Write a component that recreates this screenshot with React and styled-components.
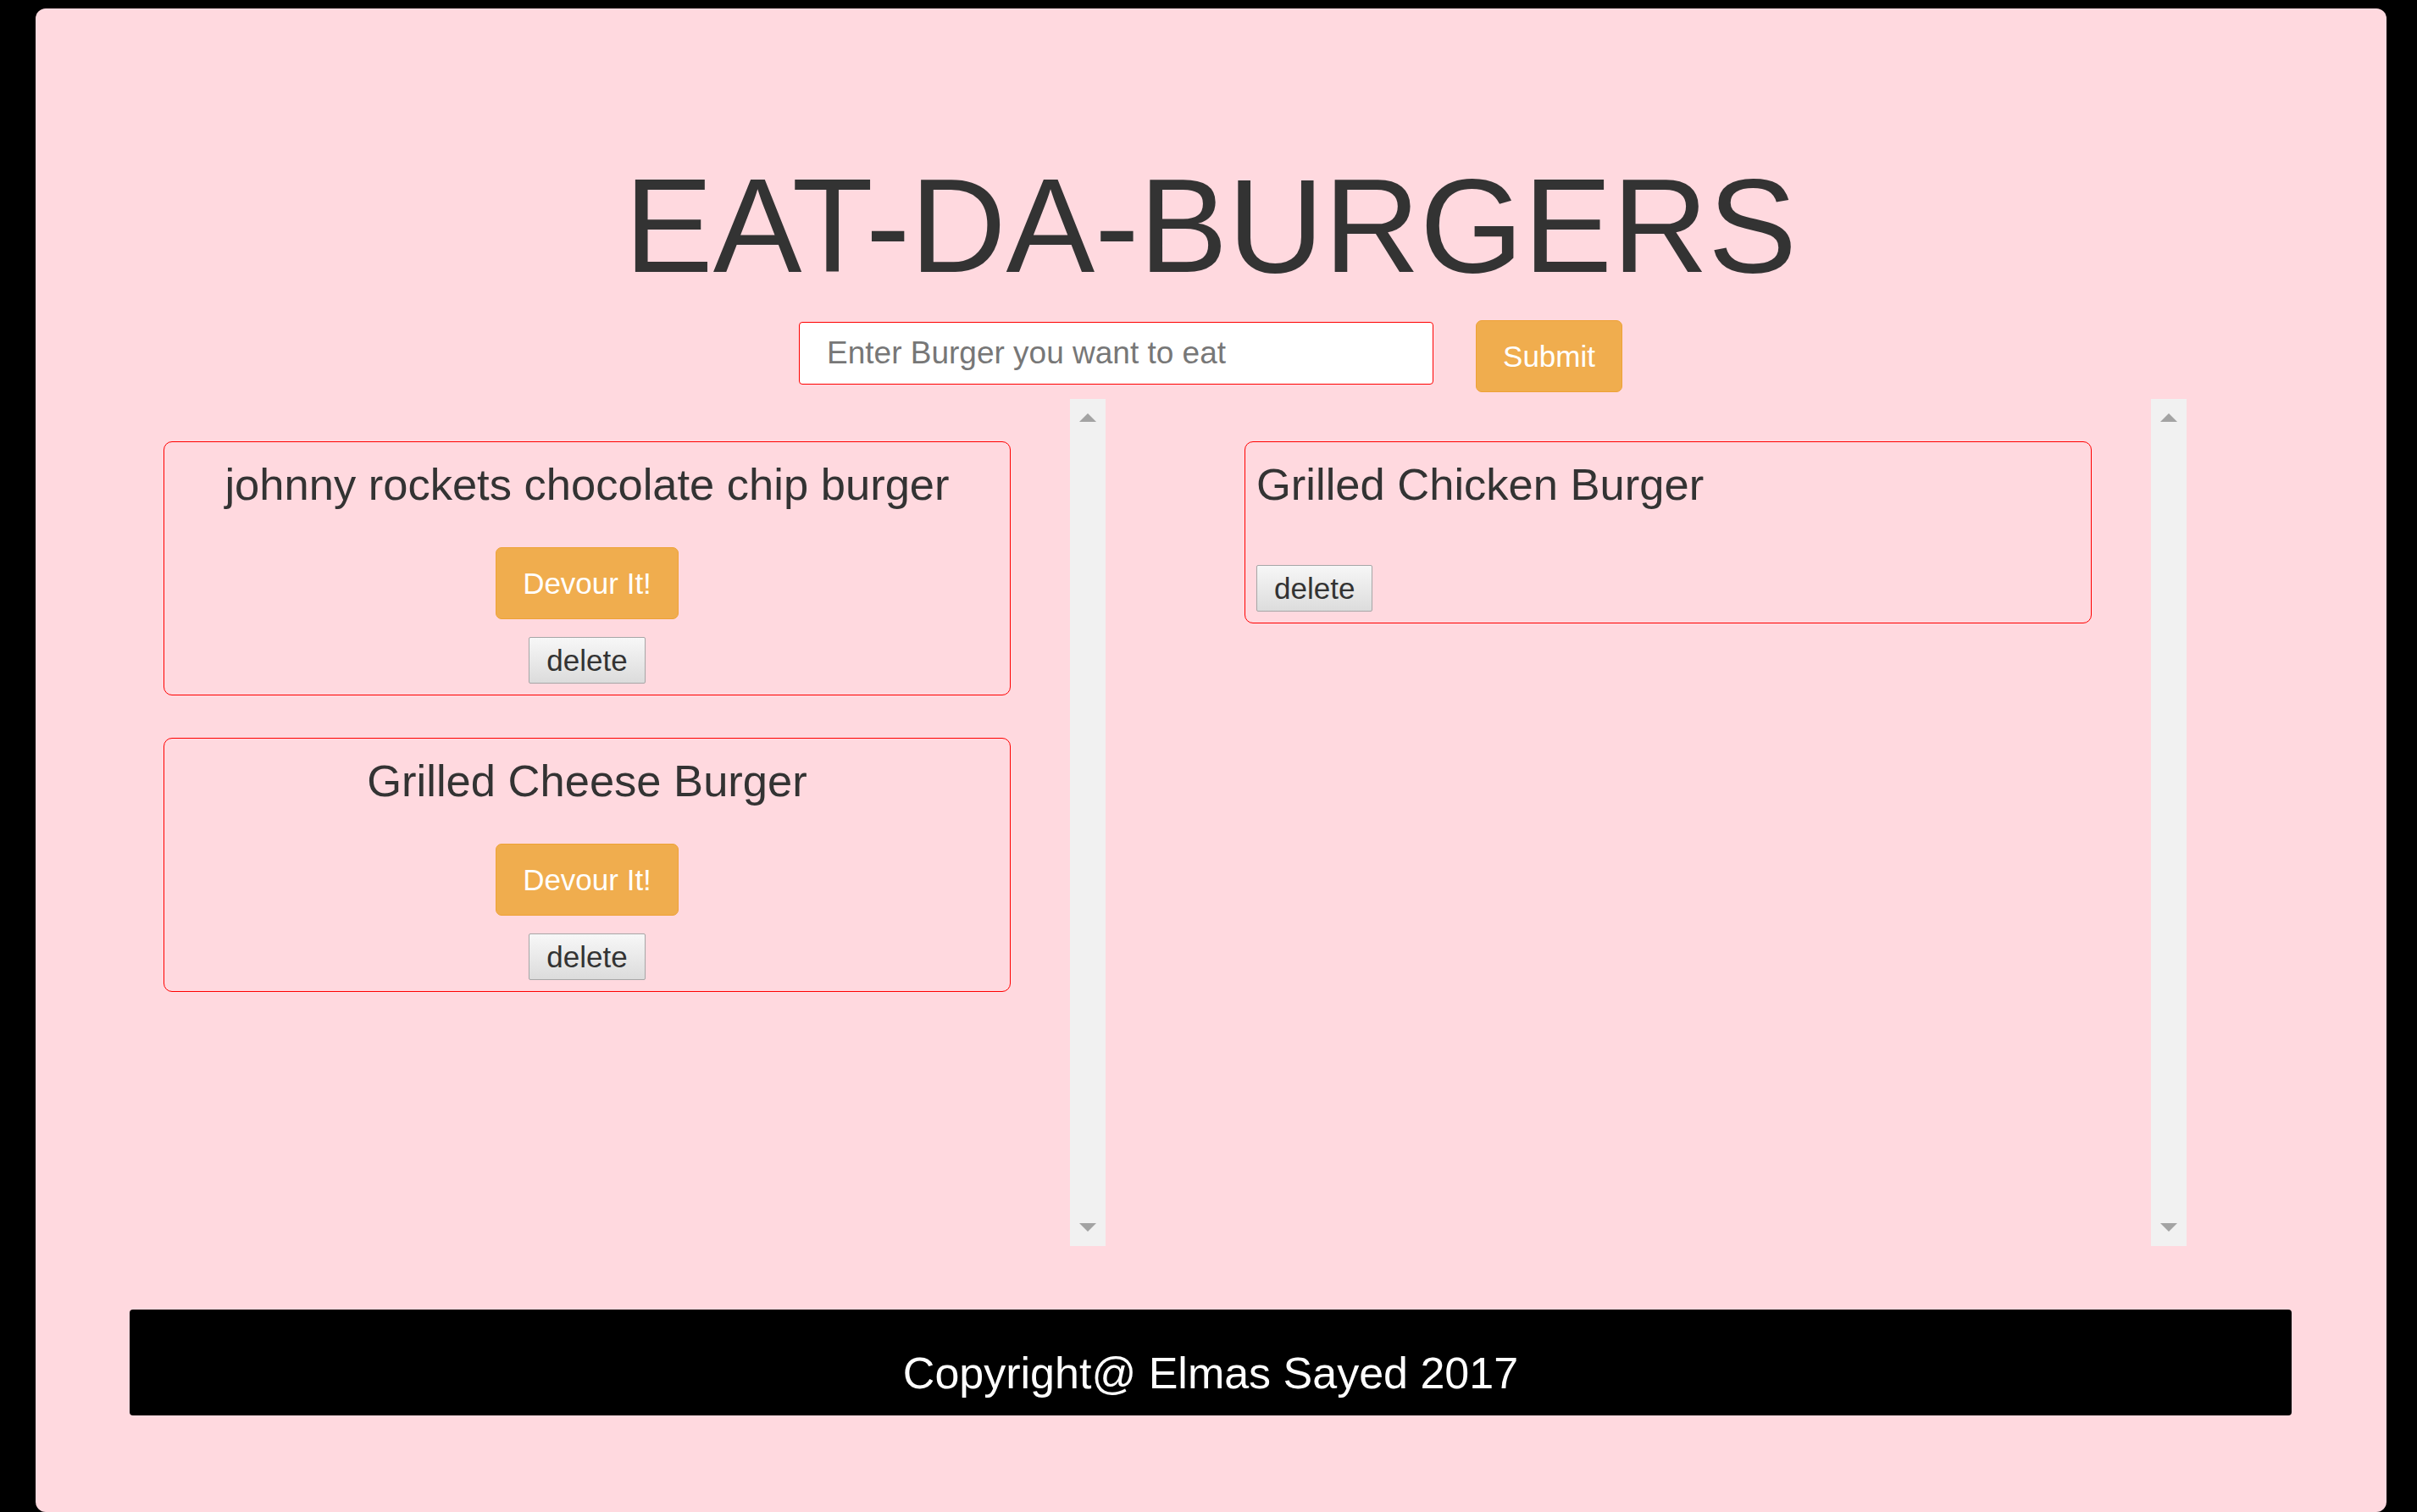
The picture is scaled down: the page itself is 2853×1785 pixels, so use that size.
import React from 'react'
import styled, { createGlobalStyle } from 'styled-components'

const GlobalStyle = createGlobalStyle`
  html, body {
    margin: 0;
    padding: 0;
    background: #000;
  }
  body {
    font-family: "Liberation Sans", Arial, sans-serif;
    color: #333;
  }
  * {
    box-sizing: border-box;
  }
`

const burgers = [
  { id: 1, name: 'johnny rockets chocolate chip burger', devoured: false },
  { id: 2, name: 'Grilled Cheese Burger', devoured: false },
  { id: 3, name: 'Grilled Chicken Burger', devoured: true },
]

export default function App () {
  const waiting = burgers.filter(b => !b.devoured)
  const eaten = burgers.filter(b => b.devoured)

  return (
    <>
      <GlobalStyle />
      <StyledPanel>
        <StyledContainer>
          <StyledTitle>EAT-DA-BURGERS</StyledTitle>
          <StyledForm onSubmit={e => e.preventDefault()}>
            <StyledInput type="text" placeholder="Enter Burger you want to eat" />
            <StyledOrangeButton type="submit">Submit</StyledOrangeButton>
          </StyledForm>
          <StyledColumns>
            <BurgerColumn burgers={waiting} centered />
            <BurgerColumn burgers={eaten} />
          </StyledColumns>
          <StyledFooter>
            <h3>Copyright@ Elmas Sayed 2017</h3>
          </StyledFooter>
        </StyledContainer>
      </StyledPanel>
    </>
  )
}

function BurgerColumn ({ burgers, centered }) {
  return (
    <StyledScrollBox>
      <StyledList>
        {burgers.map(burger => (
          <StyledCard key={burger.id} $centered={centered}>
            <StyledCardTitle>{burger.name}</StyledCardTitle>
            <StyledActions $centered={centered}>
              {!burger.devoured && (
                <StyledOrangeButton type="button">Devour It!</StyledOrangeButton>
              )}
              <StyledDeleteButton type="button">delete</StyledDeleteButton>
            </StyledActions>
          </StyledCard>
        ))}
      </StyledList>
      <StyledRail>
        <StyledArrow $dir="up" />
        <StyledArrow $dir="down" />
      </StyledRail>
    </StyledScrollBox>
  )
}

const StyledPanel = styled.div`
  margin: 10px 36px 0 42px;
  min-height: 1775px;
  background: #ffd9df;
  border-radius: 12px;
  padding: 171px 0 114px;
`

const StyledContainer = styled.div`
  width: 2552px;
  margin-left: 111px;
`

const StyledTitle = styled.h1`
  margin: 0;
  text-align: center;
  font-size: 157px;
  font-weight: 400;
  line-height: 172px;
  color: #333;
`

const StyledForm = styled.form`
  display: flex;
  justify-content: center;
  align-items: flex-start;
  gap: 50px;
  margin-top: 25px;
`

const StyledInput = styled.input`
  width: 749px;
  height: 74px;
  margin-top: 2px;
  padding: 0 32px;
  border: 1px solid #ff0000;
  border-radius: 4px;
  background: #fff;
  font-family: inherit;
  font-size: 37px;
  color: #555;
  outline: none;
  &::placeholder {
    color: #777;
  }
`

const StyledOrangeButton = styled.button`
  height: 85px;
  padding: 0 31px;
  background: #f0ad4e;
  border: 1px solid #eea236;
  border-radius: 7px;
  color: #fff;
  font-family: inherit;
  font-size: 35px;
  cursor: pointer;
`

const StyledDeleteButton = styled.button`
  height: 55px;
  padding: 0 20px;
  background: linear-gradient(#f7f7f7, #dcdcdc);
  border: 1px solid #a6a6a6;
  border-radius: 2px;
  color: #333;
  font-family: inherit;
  font-size: 35px;
  cursor: pointer;
`

const StyledColumns = styled.div`
  display: grid;
  grid-template-columns: 1fr 1fr;
  margin-top: 8px;
`

const StyledScrollBox = styled.div`
  display: flex;
  height: 1000px;
  width: 1152px;
`

const StyledList = styled.div`
  width: 1110px;
  padding: 50px 0 0 40px;
  display: flex;
  flex-direction: column;
  gap: 50px;
`

const StyledRail = styled.div`
  width: 42px;
  background: #f1f1f1;
  display: flex;
  flex-direction: column;
  justify-content: space-between;
  align-items: center;
  padding: 17px 0;
`

const StyledArrow = styled.span`
  width: 0;
  height: 0;
  border-left: 10px solid transparent;
  border-right: 10px solid transparent;
  ${p => p.$dir === 'up'
    ? 'border-bottom: 10px solid #a3a3a3;'
    : 'border-top: 10px solid #a3a3a3;'}
`

const StyledCard = styled.div`
  width: 1000px;
  border: 1px solid #ff0000;
  border-radius: 10px;
  padding: 21px 13px 13px;
  text-align: ${p => (p.$centered ? 'center' : 'left')};
`

const StyledCardTitle = styled.h3`
  margin: 0;
  font-size: 52.5px;
  font-weight: 400;
  line-height: 57px;
  color: #333;
`

const StyledActions = styled.div`
  display: flex;
  flex-direction: column;
  align-items: ${p => (p.$centered ? 'center' : 'flex-start')};
  gap: 21px;
  margin-top: ${p => (p.$centered ? '46px' : '67px')};
`

const StyledFooter = styled.footer`
  margin-top: 75px;
  height: 125px;
  background: #000;
  border-radius: 4px;
  text-align: center;
  padding-top: 47px;
  h3 {
    margin: 0;
    color: #fff;
    font-size: 52px;
    font-weight: 400;
    line-height: 57px;
  }
`
